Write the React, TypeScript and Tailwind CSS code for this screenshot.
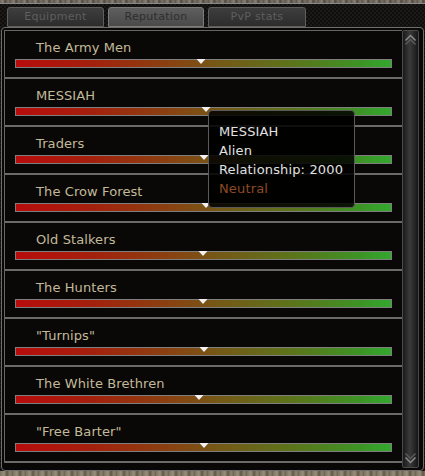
const factions = [
  { name: 'The Army Men', pos: 49.3 },
  { name: 'MESSIAH', pos: 50.7 },
  { name: 'Traders', pos: 50.1 },
  { name: 'The Crow Forest', pos: 50.7 },
  { name: 'Old Stalkers', pos: 49.9 },
  { name: 'The Hunters', pos: 49.9 },
  { name: '"Turnips"', pos: 50.1 },
  { name: 'The White Brethren', pos: 48.8 },
  { name: '"Free Barter"', pos: 50.1 },
]

function Chevrons({ up }: { up: boolean }) {
  return (
    <svg width="13" height="12" viewBox="0 0 13 12" className={up ? '' : 'rotate-180'}>
      <path d="M1.5 6.5 L6.5 1.5 L11.5 6.5" fill="none" stroke="#8c8c8c" strokeWidth="1.5" />
      <path d="M1.5 10.5 L6.5 5.5 L11.5 10.5" fill="none" stroke="#5a5a5a" strokeWidth="1.5" />
    </svg>
  )
}

export default function App() {
  return (
    <div
      className="relative h-[476px] w-[425px] overflow-hidden bg-[conic-gradient(#1b1a19_25%,#0f0e0d_0_50%,#1b1a19_0_75%,#0f0e0d_0)] bg-[length:4px_4px]"
      style={{ fontFamily: '"DejaVu Sans", Verdana, sans-serif' }}
    >
      {/* top texture strip */}
      <div className="h-[3px] bg-[repeating-linear-gradient(90deg,#6e665c_0px,#8a8276_3px,#4e4840_5px,#7a7266_8px,#5c554c_11px)]" />
      <div className="h-[1px] bg-[#8a8a8a]" />

      {/* tabs */}
      <div className="mt-[3px] flex h-[20px] gap-[4px] pl-[7px]">
        <div className="flex w-[97px] items-center justify-center rounded-t-[3px] border border-[#5e5e5e] bg-[linear-gradient(#3e3e3e,#2c2c2c)] text-[11px] tracking-[0.3px] text-[#5e5e5e]">
          Equipment
        </div>
        <div className="flex w-[96px] items-center justify-center rounded-t-[3px] border border-[#7c7c7c] bg-[linear-gradient(#5e5e5e,#4a4a4a)] text-[11px] tracking-[0.3px] text-[#2e2e2e]">
          Reputation
        </div>
        <div className="flex w-[98px] items-center justify-center rounded-t-[3px] border border-[#5e5e5e] bg-[linear-gradient(#3e3e3e,#2c2c2c)] text-[11px] tracking-[0.3px] text-[#5e5e5e]">
          PvP stats
        </div>
      </div>

      {/* panel */}
      <div className="ml-[1px] flex h-[444px] w-[423px] items-start rounded-[4px] border border-[#6e6e6e] bg-[#0a0806] pl-[2px] pt-[2px]">
        <div className="w-[398px] border-l border-t border-[#666]">
          {factions.map((f) => (
            <div key={f.name} className="h-[48px] border-b-2 border-[#6a6a6a] pl-[10px] pt-[9px]">
              <div className="pl-[21px] text-[13px] leading-[16px] tracking-[0.1px] text-[#c2ba9a]">{f.name}</div>
              <div className="relative mt-[3px] h-[9px] w-[377px] border border-[#7e7e7e] bg-[linear-gradient(90deg,#b80c0c_0%,#a4200c_20%,#8a4010_40%,#745a16_55%,#5a761c_75%,#3c9426_92%,#34a82e_100%)]">
                <svg
                  width="9"
                  height="5"
                  viewBox="0 0 9 5"
                  className="absolute top-[-1px] -translate-x-1/2"
                  style={{ left: `${f.pos}%` }}
                >
                  <path d="M0 0 H9 L4.5 5 Z" fill="#f2f2f2" />
                </svg>
              </div>
            </div>
          ))}
        </div>

        {/* scrollbar */}
        <div className="flex h-[438px] w-[17px] flex-col items-center justify-between rounded-[2px] border border-[#4a4a4a] bg-[linear-gradient(90deg,#1a1a1a,#3a3a3a_45%,#2a2a2a_70%,#161616)] py-[3px]">
          <Chevrons up />
          <Chevrons up={false} />
        </div>
      </div>

      {/* bottom texture strip */}
      <div className="h-[5px] bg-[repeating-linear-gradient(90deg,#7c7264_0px,#9a8e7a_4px,#5e5648_7px,#8e846e_10px,#6a6252_13px)]" />

      {/* tooltip */}
      <div className="absolute left-[208px] top-[110px] h-[98px] w-[147px] rounded-[4px] border border-[#5a5a5a] bg-[rgba(0,0,0,0.86)] pl-[10px] pt-[11px] text-[13px] leading-[19px] tracking-[0.15px] text-[#e2e2e2]">
        <div>MESSIAH</div>
        <div>Alien</div>
        <div>Relationship: 2000</div>
        <div className="text-[#8e4a22]">Neutral</div>
      </div>
    </div>
  )
}
